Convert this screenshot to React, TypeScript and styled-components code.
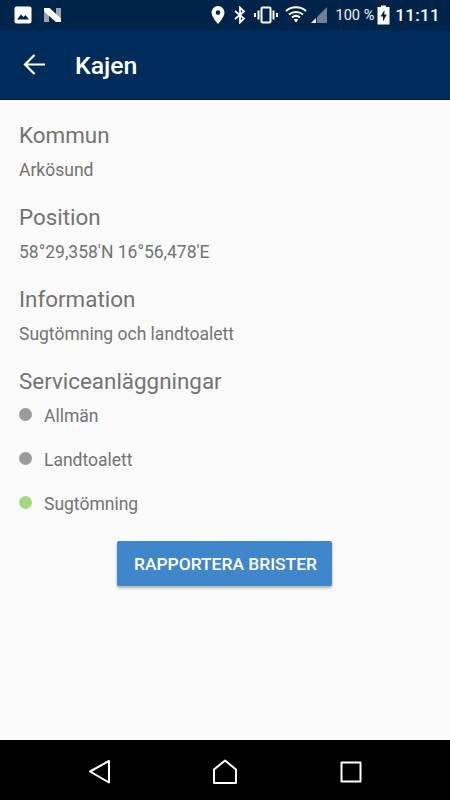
import { createGlobalStyle } from 'styled-components'
import styled from 'styled-components'

const GlobalStyle = createGlobalStyle`
  html, body { margin: 0; padding: 0; background: #fafafa; }
  body { font-family: Roboto, "Liberation Sans", sans-serif; }
`

const Screen = styled.div`
  width: 450px;
  height: 800px;
  display: flex;
  flex-direction: column;
  overflow: hidden;
  background: #fafafa;
`

const StatusBar = styled.div`
  height: 30px;
  flex: none;
  background: #00234a;
  display: flex;
  align-items: center;
  justify-content: space-between;
  padding: 0 10px 0 14px;
  color: #fff;
`

const StatusGroup = styled.div`
  display: flex;
  align-items: center;
`

const BatteryText = styled.span`
  font-size: 14.600px;
  color: #f2f4f6;
  margin-left: 7px;
`

const Clock = styled.span`
  font-size: 17px;
  font-weight: 500;
  letter-spacing: 0.3px;
  margin-left: 5px;
`

const AppBar = styled.header`
  height: 70px;
  box-sizing: border-box;
  flex: none;
  background: #002c5c;
  border-bottom: 1px solid #0d2036;
  display: flex;
  align-items: center;
  padding-left: 23px;
`

const BarTitle = styled.h1`
  margin: 2px 0 0 29px;
  font-size: 24.800px;
  font-weight: 500;
  color: #fff;
`

const Content = styled.main`
  flex: 1;
  padding: 21px 20px 0 19px;
  display: flex;
  flex-direction: column;
`

const Heading = styled.h2`
  margin: 0;
  font-size: 22.400px;
  line-height: 28px;
  font-weight: 400;
  color: #737373;
`

const Value = styled.p`
  margin: 12px 0 23px;
  font-size: 17.500px;
  line-height: 19px;
  color: #737373;
`

const ServiceList = styled.ul`
  list-style: none;
  margin: 11px 0 0;
  padding: 0;
  display: flex;
  flex-direction: column;
  gap: 25px;
`

const ServiceRow = styled.li`
  display: flex;
  align-items: center;
  gap: 12px;
  height: 19px;
  font-size: 17.500px;
  color: #737373;
`

const Dot = styled.span<{ $active?: boolean }>`
  width: 13px;
  height: 13px;
  border-radius: 50%;
  flex: none;
  margin-top: -3px;
  background: ${p => (p.$active ? '#a5d880' : '#9b9b9b')};
`

const ReportButton = styled.button`
  align-self: center;
  margin-top: 28px;
  width: 215px;
  height: 45px;
  padding: 1px 0 0 2px;
  border: none;
  border-radius: 2px;
  background: #3f87ca;
  color: #fff;
  font-family: inherit;
  font-size: 17.400px;
  font-weight: 500;
  box-shadow: 0 2px 3px rgba(0, 0, 0, 0.3);
`

const NavBar = styled.nav`
  height: 60px;
  flex: none;
  background: #000;
  display: flex;
  align-items: center;
  justify-content: center;
  gap: 101px;
  padding-top: 3px;
  box-sizing: border-box;
`

const App = () => {
  return (
    <Screen>
      <GlobalStyle />
      <StatusBar>
        <StatusGroup>
          <svg width="18" height="18" viewBox="0 0 18 18" fill="none">
            <rect x="0.5" y="0.5" width="17" height="17" rx="2" fill="#fff" />
            <path d="M3 13.5 L7 8.5 L9.5 11 L11.5 9 L15 13.5 Z" fill="#00234a" />
          </svg>
          <svg width="20" height="18" viewBox="0 0 20 18" style={{ marginLeft: 11 }}>
            <path d="M1 2 H6 V16 H1 Z" fill="#9aa4ae" />
            <path d="M13 2 H18 V12 H13 Z" fill="#9aa4ae" />
            <path d="M1 2 H6.5 L18 12.5 V16 H13 L1 5.5 Z" fill="#fff" />
          </svg>
        </StatusGroup>
        <StatusGroup>
          <svg width="16" height="20" viewBox="0 0 16 20">
            <path fillRule="evenodd" d="M8 1a6.5 6.5 0 0 0-6.5 6.5C1.500 12 8 19 8 19s6.500-7 6.500-11.500A6.500 6.500 0 0 0 8 1Zm0 4.300a2.300 2.300 0 1 1 0 4.600 2.300 2.300 0 0 1 0-4.600Z" fill="#fff" />
          </svg>
          <svg width="14" height="18" viewBox="0 0 14 18" style={{ marginLeft: 7 }}>
            <path d="M2 5 L11 12.500 L7 16.500 V1.500 L11 5.500 L2 13" fill="none" stroke="#fff" strokeWidth="1.800" />
          </svg>
          <svg width="24" height="18" viewBox="0 0 24 18" style={{ marginLeft: 7 }}>
            <rect x="7.500" y="1.500" width="9" height="15" rx="1" fill="none" stroke="#fff" strokeWidth="2" />
            <path d="M4.500 4.500 V13.500 M1 7 V11 M19.500 4.500 V13.500 M23 7 V11" stroke="#fff" strokeWidth="2" />
          </svg>
          <svg width="22" height="18" viewBox="0 0 22 18" style={{ marginLeft: 7 }}>
            <path d="M1 5 C6.500 0 15.500 0 21 5 M4 8.500 C8 5 14 5 18 8.500 M7 11.500 C9.500 9.500 12.500 9.500 15 11.500" fill="none" stroke="#fff" strokeWidth="2" />
            <path d="M8.800 13.500 C10 12.500 12 12.500 13.200 13.500 L11 16.500 Z" fill="#fff" />
          </svg>
          <svg width="18" height="18" viewBox="0 0 18 18" style={{ marginLeft: 3 }}>
            <path d="M1 17 L6 12 V17 Z" fill="#fff" />
            <path d="M7 11 L17 1 V17 H7 Z" fill="#6c8096" />
          </svg>
          <BatteryText>100 %</BatteryText>
          <svg width="13" height="20" viewBox="0 0 13 20" style={{ marginLeft: 3 }}>
            <path fillRule="evenodd" d="M4 0.500 H9 V2 H12.500 V19.500 H0.500 V2 H4 Z M7.500 5 L3.500 11.500 H6 V16.500 L9.800 9.500 H7.300 Z" fill="#fff" />
          </svg>
          <Clock>11:11</Clock>
        </StatusGroup>
      </StatusBar>
      <AppBar>
        <svg width="23" height="23" viewBox="0 0 23 23" fill="none" stroke="#fff" strokeWidth="2.200">
          <path d="M22 11.500 H2 M11.500 2 L2 11.500 L11.500 21" />
        </svg>
        <BarTitle>Kajen</BarTitle>
      </AppBar>
      <Content>
        <Heading>Kommun</Heading>
        <Value>Arkösund</Value>
        <Heading>Position</Heading>
        <Value>58°29,358'N 16°56,478'E</Value>
        <Heading>Information</Heading>
        <Value>Sugtömning och landtoalett</Value>
        <Heading>Serviceanläggningar</Heading>
        <ServiceList>
          <ServiceRow><Dot />Allmän</ServiceRow>
          <ServiceRow><Dot />Landtoalett</ServiceRow>
          <ServiceRow><Dot $active />Sugtömning</ServiceRow>
        </ServiceList>
        <ReportButton>RAPPORTERA BRISTER</ReportButton>
      </Content>
      <NavBar>
        <svg width="24" height="26" viewBox="0 0 24 26" fill="none" stroke="#fff" strokeWidth="2" strokeLinejoin="round">
          <path d="M21 2 V23.500 L2 12.500 Z" />
        </svg>
        <svg width="26" height="26" viewBox="0 0 26 26" fill="none" stroke="#fff" strokeWidth="2" strokeLinejoin="round">
          <path d="M1 24 V10.500 L12 1.500 L23 10.500 V24 Z" />
        </svg>
        <svg width="22" height="22" viewBox="0 0 22 22" fill="none" stroke="#fff" strokeWidth="2" strokeLinejoin="round">
          <rect x="1.500" y="1.500" width="19" height="19" />
        </svg>
      </NavBar>
    </Screen>
  )
}

export default App
